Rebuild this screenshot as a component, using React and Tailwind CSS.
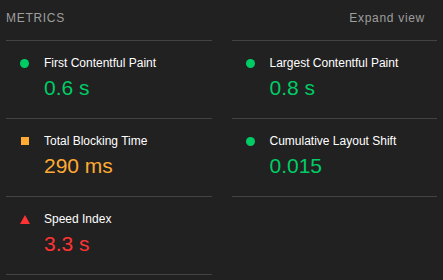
const metrics = [
  { title: "First Contentful Paint", value: "0.6 s", kind: "pass" },
  { title: "Largest Contentful Paint", value: "0.8 s", kind: "pass" },
  { title: "Total Blocking Time", value: "290 ms", kind: "average" },
  { title: "Cumulative Layout Shift", value: "0.015", kind: "pass" },
  { title: "Speed Index", value: "3.3 s", kind: "fail" },
];

const valueColor = {
  pass: "text-[#00cc66]",
  average: "text-[#ffaa33]",
  fail: "text-[#ff3333]",
};

function Icon({ kind }) {
  if (kind === "pass") {
    return <span className="block w-[9px] h-[9px] rounded-full bg-[#00cc66]"></span>;
  }
  if (kind === "average") {
    return <span className="block w-[8px] h-[8px] ml-[0.5px] bg-[#ffaa33]"></span>;
  }
  return (
    <svg width="10" height="9" viewBox="0 0 10 9" className="block">
      <polygon points="5,0 10,9 0,9" fill="#ff3333" />
    </svg>
  );
}

function Metric({ m, top }) {
  return (
    <div className={`border-b border-[#434343] ${top ? "border-t" : ""} pt-[13px] pb-[14px]`}>
      <div className="flex items-center h-[18px] pl-[14px]">
        <div className="w-[24px] flex items-center">
          <Icon kind={m.kind} />
        </div>
        <div className="text-[12px] leading-[18px] text-white">{m.title}</div>
      </div>
      <div className={`pl-[38px] text-[21px] leading-[32px] ${valueColor[m.kind]}`}>{m.value}</div>
    </div>
  );
}

export default function App() {
  return (
    <div className="w-[443px] h-[280px] bg-[#212121] px-[6px] overflow-hidden font-['Liberation_Sans',Arial,sans-serif]">
      <div className="flex justify-between h-[40px] pt-[10px] text-[12px] leading-[16px] tracking-[0.7px] text-[#9e9e9e]">
        <div>METRICS</div>
        <div className="mr-[12px]">Expand view</div>
      </div>
      <div className="grid grid-cols-2 gap-x-[20px] items-start">
        {metrics.map((m, i) => (
          <Metric key={m.title} m={m} top={i < 2} />
        ))}
      </div>
    </div>
  );
}
